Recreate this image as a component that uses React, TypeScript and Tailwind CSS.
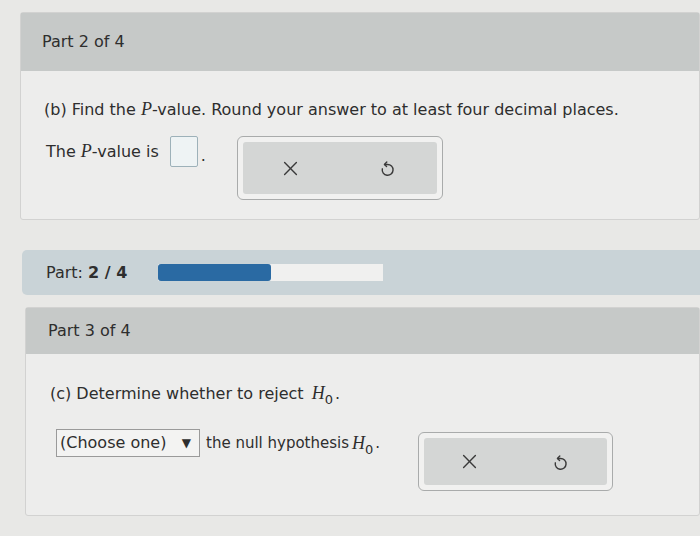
import React from 'react';

const sans = "font-['DejaVu_Sans',sans-serif]";
const mathVar = "font-['Liberation_Serif',serif] italic";

function UndoIcon() {
  return (
    <svg width="17" height="20" viewBox="0 0 14 17" fill="none" stroke="#3a3a3a" strokeWidth="1.2" strokeLinecap="round" strokeLinejoin="round">
      <path d="M2.6 9.2 A4.6 4.6 0 1 0 7 5.5 L4.6 5.5" />
      <path d="M6.4 3.4 L4.4 5.5 L6.2 7.2" />
    </svg>
  );
}

function ClearIcon() {
  return (
    <svg width="15" height="15" viewBox="0 0 14 14" stroke="#3a3a3a" strokeWidth="1.3" strokeLinecap="round">
      <path d="M1.5 1.5 L12.5 12.5 M12.5 1.5 L1.5 12.5" />
    </svg>
  );
}

// clear / undo pair shown next to each answer
function ActionBox({ className }: { className: string }) {
  return (
    <div className={`rounded-[6px] border border-[#a9abab] bg-[#f1f1f0] p-[5px] ${className}`}>
      <div className="flex h-full items-center justify-around rounded-[3px] bg-[#d4d6d5]">
        <ClearIcon />
        <UndoIcon />
      </div>
    </div>
  );
}

function H0() {
  return (
    <span className="ml-[3px]">
      <span className={`${mathVar} text-[18px]`}>H</span>
      <span className="relative top-[5px] text-[13px]">0</span>
    </span>
  );
}

export default function App() {
  return (
    <div className={`h-[536px] w-[700px] overflow-hidden bg-[#e8e8e6] pt-[12px] text-[#2e2e2e] ${sans}`}>
      {/* Part 2 */}
      <div className="ml-[20px] rounded-[3px] border border-[#d2d2d1] bg-[#ededec]">
        <div className="flex h-[58px] items-center bg-[#c6c9c8] px-[21px] text-[16px]">Part 2 of 4</div>
        <div className="h-[148px] px-[23px] pt-[25px]">
          <p className="text-[16px]">
            (b) Find the <span className={`${mathVar} text-[18px]`}>P</span>-value. Round your answer to at least four decimal places.
          </p>
          <div className="mt-[11px] flex items-start">
            <div className="flex items-center text-[16px]">
              <span className="ml-[2px]">
                The <span className={`${mathVar} text-[18px]`}>P</span>-value is
              </span>
              <span className="ml-[11px] h-[31px] w-[28px] rounded-[2px] border border-[#9db1b9] bg-[#eef3f4]" />
              <span className="ml-[3px] mt-[10px]">.</span>
            </div>
            <ActionBox className="ml-[31px] mt-[2px] h-[64px] w-[206px]" />
          </div>
        </div>
      </div>

      {/* progress */}
      <div className="ml-[22px] mt-[30px] flex h-[45px] items-center rounded-l-[5px] bg-[#c9d3d7] pl-[24px] text-[16px]">
        <span>
          Part: <span className="font-semibold">2 / 4</span>
        </span>
        <div className="ml-[31px] flex h-[17px] w-[225px] bg-[#f0f0ef]">
          <div className="h-full w-[113px] rounded-[3px] bg-[#2a6aa3]" />
        </div>
      </div>

      {/* Part 3 */}
      <div className="ml-[25px] mt-[12px] rounded-[3px] border border-[#d2d2d1] bg-[#ededec]">
        <div className="flex h-[46px] items-center bg-[#c6c9c8] px-[22px] text-[16px]">Part 3 of 4</div>
        <div className="h-[161px] px-[24px] pt-[26px]">
          <p className="text-[16px]">
            (c) Determine whether to reject <H0 />
            <span className="ml-[2px]">.</span>
          </p>
          <div className="mt-[22px] flex items-start">
            <div className="flex items-center text-[15px]">
              <div className="ml-[6px] flex h-[28px] w-[144px] items-center justify-between border border-[#9a9a9a] bg-[#f3f3f2] pl-[3px] pr-[8px] text-[16px]">
                <span>(Choose one)</span>
                <span className="text-[12px]">▼</span>
              </div>
              <span className="ml-[6px]">the null hypothesis</span>
              <H0 />
              <span className="ml-[2px]">.</span>
            </div>
            <ActionBox className="ml-[38px] mt-[3px] h-[59px] w-[195px]" />
          </div>
        </div>
      </div>
    </div>
  );
}
